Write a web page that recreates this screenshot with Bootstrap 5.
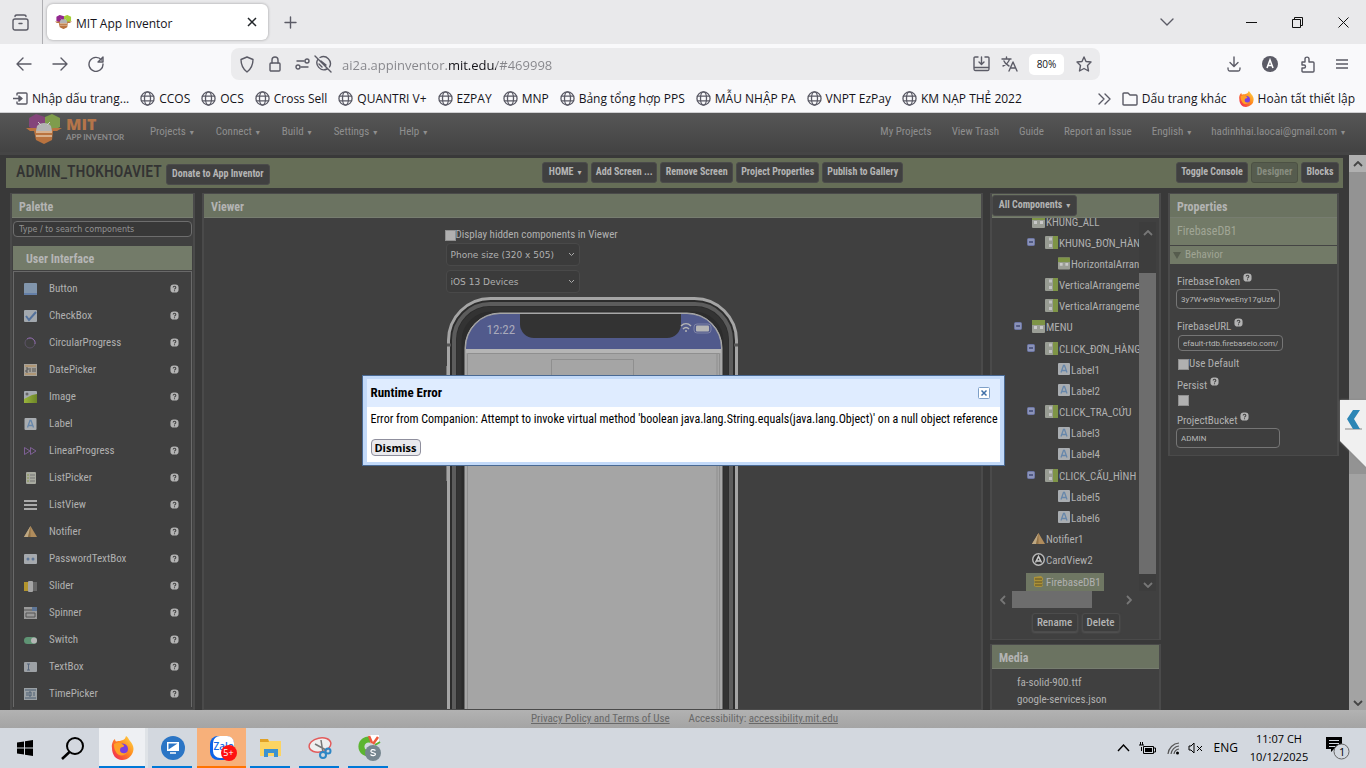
<!DOCTYPE html>
<html lang="vi">
<head>
<meta charset="utf-8">
<meta name="viewport" content="width=device-width, initial-scale=1">
<title>MIT App Inventor</title>
<link href="https://cdn.jsdelivr.net/npm/bootstrap@5.3.0/dist/css/bootstrap.min.css" rel="stylesheet">
<style>
:root{--ui:"Open Sans","Noto Sans",sans-serif;--app:"Roboto Condensed","Liberation Sans Narrow",Roboto,sans-serif;--form:"DejaVu Sans","Open Sans",sans-serif}
body{font-family:var(--ui);font-size:12px;line-height:16px;color:#15141a;background:#3a3a3a;overflow:hidden}
svg{display:block;flex:none}
button,a,input,select{font:inherit;color:inherit}
a{text-decoration:none}
.icon-btn{background:none;border:0;padding:0;color:#5b5b66}
.ln{fill:none;stroke:currentColor;stroke-width:1.4;stroke-linecap:round;stroke-linejoin:round}

/* browser chrome */
.tab-strip{background:#e9e9eb;height:44px}
.side-toggle{width:43px;border-right:1px solid #aeaeb2}
.tab-card{width:221px;height:36px;border-radius:6px;background:#fff;box-shadow:0 0 3px #00000055}
.win-btns{gap:35px;padding:0 13px 0 24px}
.tool-row{background:#f9f9fb;height:40px}
.nav-btns{width:231px;gap:20px;padding-left:16px}
.url-box{background:#ebebed;height:32px;border-radius:8px;margin-top:4px;color:#5b5b66}
.url-input{border:0;outline:0;background:linear-gradient(90deg,#85858a 106px,#15141a 106px,#15141a 154px,#85858a 154px);-webkit-background-clip:text;background-clip:text;-webkit-text-fill-color:transparent;font-size:13px;line-height:20px;padding:0;margin:1px 0 0 10px}
.zoom-pill{width:35px;height:21px;border-radius:5px;background:#fff;color:#15141a;font-size:10px;border:0;padding:0}
.mark-row{background:#f9f9fb;height:29px;border-bottom:1px solid #cfcfd2;gap:11px;padding:1px 11px 0 13px}
.mark-row a{display:flex;align-items:center;gap:4px;white-space:nowrap}
.mark-row svg{color:#5b5b66}

/* web page */
.app{font-family:var(--app);font-size:11px;line-height:14px;color:#b0b0b0;background:#393939}
.app-nav{height:39px;background:linear-gradient(#565656,#434343);color:#8f8f8f}
.brand{width:150px;padding:0 0 7px 26px}
.brand b{display:block;color:#b4754a;font-family:"Open Sans",sans-serif;font-weight:800;font-size:16px;line-height:16px}
.brand small{display:block;font-size:8px;line-height:10px;color:#8c8c8c;font-family:Lato,sans-serif;font-weight:700;white-space:nowrap}
.app-nav a{white-space:nowrap}
.arrow::after{content:"▾";font-size:8px;margin-left:4px;font-family:"DejaVu Sans",sans-serif}
.work{border-top:3px solid #454545}
.project-bar{background:#666e57;height:30px;margin:3px 6px 0;padding:0 4px 2px 0}
.project-left{width:40%;padding-left:10px;margin-right:3px}
.project-name{color:#333;font-size:16px;line-height:20px;font-weight:500;margin:0}
.dark-btn{background:#404040;border:1px solid #4b4b4b;border-radius:3px;height:21px;line-height:12px;font-weight:700;font-size:10px;color:#b4b4b4;padding:0;text-align:center;white-space:nowrap}
.dark-btn:disabled{background:#565c4e;border-color:#4c5144;color:#888d80}
.pane{background:#404040;border:solid #4a4a4a;border-width:1px 2px}
.pane-head{background:#6b7361;height:24px;border-bottom:1px solid #777d70;font-size:12px;font-weight:700;line-height:26px;padding-left:7px;color:#b3b3b3;margin:0}
.panes{padding:5px 10px 0;gap:7px}
.palette{width:185px}
.find{margin:3px 1px 0;height:16px;background:#383838;border:1px solid #6d6d6d;border-radius:4px;font:8px/12px var(--form);padding:0 5px;color:#aaa}
.find::placeholder{color:#929292}
.group-head{background:#737b69;height:24px;margin:9px 1px 0;font-size:12px;font-weight:700;line-height:26px;padding-left:13px;color:#b5b5b5}
.group-body{margin:1px 1px 0;border:1px solid #696969;border-bottom:0;padding:3px 10px 0}
.group-body li{height:27px;display:flex;align-items:center;gap:12px}
.group-body li>svg:last-child{margin-left:auto;margin-right:2px}
.stage{width:294px}
.box{appearance:none;width:11px;height:11px;background:#b0b0b0;border:1px solid #909090;margin:0;flex:none}
.show-hidden{margin:10px 0 1px -1px}
.pick{appearance:none;display:block;width:134px;height:23px;border:1px solid #494949;border-radius:4px;background:#3b3b3b url("data:image/svg+xml,%3Csvg xmlns='http://www.w3.org/2000/svg' width='7' height='5'%3E%3Cpath d='M1 1l2.500 2.500L6 1' fill='none' stroke='%23aaa'/%3E%3C/svg%3E") no-repeat right 4px center;font:9px/14px var(--form);color:#b0b0b0;padding:0 4px}
.handset{height:440px;margin-top:3px}
.status-time{left:41px;top:26px;font-size:13px;line-height:16px;color:#aab}
.components{width:171px}
.tree-box{height:373px}
.tree{height:381px;margin-bottom:-2px}
.tree li{display:flex;align-items:center;gap:1px;flex:1 1 0;white-space:nowrap;min-height:0}
.tree .fold{width:8px;margin-right:9px;margin-top:-4px}
.tree li>svg,.tree .pickd>svg{margin-top:-3px}
.l1{padding-left:40px}.l2{padding-left:53px}.l3{padding-left:66px}
.tree .f1{padding-left:22px}.tree .f2{padding-left:35px}
.pickd{display:flex;gap:1px;align-items:center;background:#6f7763;height:20px;padding:0 3px 0 6px;margin-left:-6px;margin-right:auto}
.vbar{width:17px;flex:none;margin-right:3px;background:#3d3d3d;color:#777}
.thumb{background:#6d6d6d}
.hbar{height:17px;width:146px;padding:0 4px 0 6px;color:#777}
.turn{transform:rotate(180deg)}.turn-l{transform:rotate(-90deg)}.turn-r{transform:rotate(90deg)}
.soft-btn{background:#3e3e3e;border:1px solid #4c4c4c;border-radius:3px;height:19px;line-height:14px;font-weight:500;color:#b4b4b4;padding:0;box-shadow:0 1px 2px #555}
.props{width:171px;height:263px}
.prop-strip{background:#727a67;color:#a0a595}
.prop-form{padding:7px 6px}
.prop-form label{display:flex;gap:3px;padding-left:1px}
.prop-form label svg{margin-top:-2px}
.prop-form .box{margin-left:1px}
.field{font:8px/12px Roboto,sans-serif;background:#3e3e3e;border:1px solid #757575;border-radius:4px;color:#b8b8b8;padding:0 4px}
.page-bar{width:17px;background:#a3a3a3;color:#444}
.app-foot{height:18px;background:linear-gradient(#b2b2b2,#a4a4a4);color:#686868;line-height:17px;padding-left:531px;gap:19px}
.app-foot a{text-decoration:underline}

/* dialog */
.dlg-veil{inset:0;z-index:5}
.dlg{width:643px;border:1px solid #4a6a94;background:#fff;color:#000}
.dlg-in{border:solid #c3daf9;border-width:3px 4px}
.dlg-head{background:#dfecff;height:28px;padding:0 6px 0 4px;font-size:13px;font-weight:700}
.dlg-body{padding:6px 0 6px 4px;font-size:12px;line-height:13px;white-space:nowrap}
.dismiss{margin-top:13px;width:50px;height:17px;padding:0;border:1px solid #8f8f9d;border-radius:4px;background:#e9e9ed;font:700 11px/13px "Open Sans",sans-serif;color:#000;display:block}
.flyout{right:0;top:287px;z-index:6;filter:drop-shadow(0 0 1px #888)}

/* taskbar */
.task{height:40px;background:#d3d8df;color:#000}
.task .tb{width:49px;height:40px;display:flex;align-items:center;justify-content:center;border:0;background:none;padding:0;position:relative}
.tb.run::after{content:"";position:absolute;left:4px;right:5px;bottom:0;height:2px;background:#0078d7}
.tb.live{background:#eef0f3;border-right:3px solid #dfe3e7;margin-left:1px}
.tb.live::after,.tb.call::after{left:0;right:0}
.tb.call{background:#f7b07a}.tb.call::after{background:#ff7200}
.zalo-word{left:4px;top:3px;color:#1268e8;font-size:10px;line-height:14px;font-weight:600}
.zalo-count{left:11px;top:9px;width:16px;height:16px;background:#f11;color:#fff;font-size:9px}
.clock{font-size:11px;line-height:18px;text-align:center;width:66px}
</style>
</head>
<body class="d-flex flex-column vh-100">
<svg width="0" height="0" class="position-absolute" aria-hidden="true">
 <defs>
  <linearGradient id="fx" x1="1" y1="0" x2="0" y2="1"><stop offset="0" stop-color="#ffe14d"/><stop offset=".45" stop-color="#ff8a1e"/><stop offset="1" stop-color="#f0185c"/></linearGradient>
  <linearGradient id="hill"><stop offset="0" stop-color="#9ab53c"/><stop offset="1" stop-color="#6d8628"/></linearGradient>
 </defs>
 <symbol id="globe" viewBox="0 0 16 16"><g class="ln"><circle cx="8" cy="8" r="7"/><ellipse cx="8" cy="8" rx="3.200" ry="7"/><path d="M1.500 5.500h13M1.500 10.500h13"/></g></symbol>
 <symbol id="fire" viewBox="0 0 24 24"><path d="M2 12C1 8 4 3 5 3c0 1 .5 2 1 2.500C8 4.500 9 5 10 5c1-1 5 0 6-5 2 1 3 4 4 5 2 2 3.500 5 3.500 8A11.500 11.500 0 0 1 12 24C6 24 2 19 2 12z" fill="url(#fx)"/><circle cx="12.500" cy="13" r="5.500" fill="#7a3fe0"/><path d="M4 8c3-2 6-2 8 0 2 1 3 2 1 3-2 0-3 1-3 3 0 4 5 4 7 2-1 4-9 5-11 0-2-3-2-5-2-8z" fill="#ff9f26"/></symbol>
 <symbol id="bee" viewBox="0 0 36 30"><path d="M10 0l9 3v10l-8 4-8-4V4z" fill="var(--w1,#84457a)"/><path d="M26 0l8 4v9l-8 4-7-4V3z" fill="var(--w2,#7f9c4c)"/><path d="M0 14h10l3 2h10l4-2h9l-5 3h-4l-1 9-8 4-8-4-2-9H4z" fill="#b9733f"/><path d="M11 12c3-4 11-4 14 0l1 5H10z" fill="#b3b3b3"/><path d="M12 8l3 3M24 8l-3 3" stroke="#ccc" stroke-width="1" fill="none"/><path d="M10 17h16v2H10zM10 21h16v2H10z" fill="#d7b08d"/></symbol>
 <symbol id="help" viewBox="0 0 10 10"><rect x=".5" y=".5" width="9" height="9" rx="3.500" fill="#b3b3b3"/><path d="M3.500 4c0-2 3-2 3 0 0 1-1.500 1-1.500 2M5 7v1" stroke="#444" fill="none" stroke-width="1.200"/></symbol>
 <symbol id="lab" viewBox="0 0 12 12"><rect width="12" height="12" rx="1" fill="#a9adb1"/><path d="M3 9.500L5.500 2.500h1L9 9.500M4 7.500h4" stroke="#6787ab" fill="none" stroke-width="1.300"/></symbol>
 <symbol id="va" viewBox="0 0 13 13"><rect width="13" height="13" rx="1" fill="#989c93"/><path d="M8 0h5v13H8z" fill="#7e9446"/><path d="M4 1.500h3v3H4zM4 8h3v3H4z" fill="#c2c2c2"/></symbol>
 <symbol id="ha" viewBox="0 0 13 13"><rect width="13" height="13" rx="1" fill="#9b9e96"/><path d="M0 0h13v5H0z" fill="#7e9446"/><path d="M2 6h3v3H2zM8 6h3v3H8z" fill="#c9c9c9"/></symbol>
 <symbol id="fold" viewBox="0 0 8 8"><rect x=".5" y=".5" width="7" height="7" rx="1" fill="#8b93b8" stroke="#6d76a6"/><path d="M2 4h4" stroke="#2c3560" stroke-width="1.200"/></symbol>
 <symbol id="warn" viewBox="0 0 13 11"><path d="M6.500 0L13 11H0z" fill="#b08c5c"/><path d="M6.500 0L4 11H0z" fill="#bda884"/><path d="M6.500 0v11H4z" fill="#8f7146"/></symbol>
 <symbol id="up" viewBox="0 0 10 6"><path d="M1 5l4-4 4 4" fill="none" stroke="currentColor" stroke-width="1.800"/></symbol>
</svg>

<header>
 <div class="tab-strip d-flex align-items-center">
  <div class="side-toggle h-100 d-flex align-items-center ps-2"><button class="icon-btn ms-1" aria-label="Sidebar"><svg width="17" height="17" viewBox="0 0 17 17" class="ln"><rect x="1" y="5" width="15" height="11" rx="2"/><path d="M3 2.500C3 1 4 1 5 1h7c1 0 2 0 2 1.500M7 9.500h3"/></svg></button></div>
  <div class="tab-card d-flex align-items-center ms-1 ps-2">
   <svg width="17" height="17" viewBox="0 0 36 32" style="--w1:#92278f;--w2:#a6ce39"><use href="#bee" width="36" height="30"/></svg>
   <span class="px-1 pt-1">MIT App Inventor</span>
   <button class="icon-btn ms-auto me-2 text-dark" aria-label="Close tab"><svg width="14" height="10" viewBox="0 0 14 10"><path d="M2 1l8 8M10 1L2 9" stroke="currentColor" stroke-width="1.500"/></svg></button>
  </div>
  <button class="icon-btn ms-3" aria-label="New tab"><svg width="13" height="13" viewBox="0 0 13 13" class="ln"><path d="M6.500 1v11M1 6.500h11"/></svg></button>
  <button class="icon-btn ms-auto" aria-label="List tabs"><svg width="14" height="8" viewBox="0 0 14 8" class="ln"><path d="M1 1l6 6 6-6"/></svg></button>
  <div class="win-btns d-flex align-items-center ms-5">
   <button class="icon-btn text-dark" aria-label="Minimize"><svg width="11" height="11"><path d="M0 5.500h11" stroke="#111"/></svg></button>
   <button class="icon-btn text-dark" aria-label="Restore"><svg width="11" height="11" fill="none" stroke="#111"><path d="M.5 2.500h8v8h-8zM2.500 2V.500h8v8H9"/></svg></button>
   <button class="icon-btn text-dark me-1" aria-label="Close"><svg width="11" height="11" stroke="#111"><path d="M.5.500l10 10M10.500.500l-10 10"/></svg></button>
  </div>
 </div>
 <div class="tool-row d-flex">
  <div class="nav-btns d-flex align-items-center">
   <button class="icon-btn" aria-label="Back"><svg width="16" height="14" viewBox="0 0 16 14" class="ln"><path d="M15 7H1M7 1L1 7l6 6"/></svg></button>
   <button class="icon-btn" aria-label="Forward"><svg width="16" height="14" viewBox="0 0 16 14" class="ln"><path d="M1 7h14M9 1l6 6-6 6"/></svg></button>
   <button class="icon-btn" aria-label="Reload"><svg width="16" height="16" viewBox="0 0 16 16" class="ln"><path d="M13.500 4A7 7 0 1 0 15 8M15 1v5h-5z"/></svg></button>
  </div>
  <div class="url-box d-flex align-items-center flex-grow-1 px-2">
   <svg width="16" height="17" viewBox="0 0 16 17" class="ln"><path d="M8 1l6 2.500C14 9 12 13 8 16 4 13 2 9 2 3.500z"/></svg>
   <svg width="14" height="16" viewBox="0 0 14 16" class="ln" style="margin:0 13px"><rect x="2" y="7" width="10" height="8" rx="1"/><path d="M4 7V4c0-4 6-4 6 0v3"/></svg>
   <svg width="15" height="12" viewBox="0 0 15 12" class="ln"><circle cx="12" cy="3" r="2"/><path d="M2 3h7M6 9h7"/><circle cx="3" cy="9" r="2"/></svg>
   <svg width="18" height="18" viewBox="0 0 18 18" class="ln ms-1"><path d="M1 1l16 16M4 4a7 7 0 0 0 9 10M6 2.500A7 7 0 0 1 15.500 12M7 6l5 4M5 9l3 3"/></svg>
   <input class="url-input flex-grow-1" aria-label="Address" value="ai2a.appinventor.mit.edu/#469998">
   <svg width="17" height="16" viewBox="0 0 17 16" class="ln"><path d="M5 1H2.500C1 1 1 1.500 1 3v9c0 2 0 2.500 1.500 2.500h12c1.500 0 1.500-.5 1.500-2.500V3c0-1.500 0-2-1.500-2H12M8.500 1v7M6 6l2.500 2.500L11 6M1 11.500h15"/></svg>
   <svg width="17" height="16" viewBox="0 0 17 16" class="ln" style="margin:0 11px"><path d="M1 3h9M5.500 1v2M2 10c4-2 6-4 6.500-7M3 5c1 3 3 4 5 5M8 15l4-9 4 9M9.500 12h5"/></svg>
   <button class="zoom-pill">80%</button>
   <svg width="16" height="16" viewBox="0 0 16 16" class="ln" style="margin-left:12px"><path d="M8 1l2 4.500 5 .5-3.500 3.500 1 5.500L8 12.500 3.500 15l1-5.500L1 6l5-.5z"/></svg>
  </div>
  <div class="d-flex align-items-center justify-content-between" style="width:266px;padding:0 18px 0 127px">
   <button class="icon-btn" aria-label="Downloads"><svg width="14" height="16" viewBox="0 0 14 16" class="ln"><path d="M7 1v9M3 6.500L7 10.500l4-4M1 12c0 2 0 3 2 3h8c2 0 2-1 2-3"/></svg></button>
   <button class="icon-btn" aria-label="Account"><svg width="16" height="16" viewBox="0 0 16 16"><circle cx="8" cy="8" r="8" fill="#5b5b66"/><path d="M5 12l3-8 3 8M6 9.500h4" stroke="#fff" stroke-width="1.600" fill="none"/></svg></button>
   <button class="icon-btn" aria-label="Extensions"><svg width="15" height="17" viewBox="0 0 15 17" class="ln"><path d="M2 6h3V3c0-2.500 4-2.500 4 0v3h4c1 0 1 .500 1 1v8c0 1 0 1-1 1H3c-1 0-1-.500-1-1v-3h2c2 0 2-3 0-3H2z"/></svg></button>
   <button class="icon-btn" aria-label="Menu"><svg width="12" height="10" viewBox="0 0 12 10" class="ln"><path d="M0 1h12M0 5h12M0 9h12"/></svg></button>
  </div>
 </div>
 <nav class="mark-row d-flex align-items-center" aria-label="Bookmarks">
  <a href="#"><svg width="15" height="13" viewBox="0 0 15 13" class="ln"><path d="M4 3V2c0-1 0-1 1-1h8c1 0 1 0 1 1v9c0 1 0 1-1 1H5c-1 0-1 0-1-1v-1M0 6.500h8M6 4l3 2.500L6 9z"/></svg>Nhập dấu trang...</a>
  <a href="#"><svg width="15" height="15"><use href="#globe"/></svg>CCOS</a>
  <a href="#"><svg width="15" height="15"><use href="#globe"/></svg>OCS</a>
  <a href="#"><svg width="15" height="15"><use href="#globe"/></svg>Cross Sell</a>
  <a href="#"><svg width="15" height="15"><use href="#globe"/></svg>QUANTRI V+</a>
  <a href="#"><svg width="15" height="15"><use href="#globe"/></svg>EZPAY</a>
  <a href="#"><svg width="15" height="15"><use href="#globe"/></svg>MNP</a>
  <a href="#"><svg width="15" height="15"><use href="#globe"/></svg>Bảng tổng hợp PPS</a>
  <a href="#"><svg width="15" height="15"><use href="#globe"/></svg>MẪU NHẬP PA</a>
  <a href="#"><svg width="15" height="15"><use href="#globe"/></svg>VNPT EzPay</a>
  <a href="#"><svg width="15" height="15"><use href="#globe"/></svg>KM NẠP THẺ 2022</a>
  <button class="icon-btn ms-auto" aria-label="More bookmarks"><svg width="13" height="12" viewBox="0 0 13 12" class="ln"><path d="M1 1l5 5-5 5M7 1l5 5-5 5"/></svg></button>
  <a href="#"><svg width="16" height="14" viewBox="0 0 16 14" class="ln"><path d="M1 12V2c0-1 0-1 1-1h4l2 2h6c1 0 1 0 1 1v8c0 1 0 1-1 1H2c-1 0-1 0-1-1z"/></svg>Dấu trang khác</a>
  <a href="#"><svg width="16" height="16"><use href="#fire"/></svg>Hoàn tất thiết lập</a>
 </nav>
</header>

<main class="app flex-grow-1 d-flex flex-column position-relative" style="min-height:0">
 <nav class="app-nav d-flex align-items-center flex-shrink-0">
  <div class="brand d-flex align-items-center gap-1"><svg width="36" height="30"><use href="#bee"/></svg><div><b>MIT</b><small>APP INVENTOR</small></div></div>
  <div class="d-flex" style="gap:22px">
   <a href="#" class="arrow">Projects</a><a href="#" class="arrow">Connect</a><a href="#" class="arrow">Build</a><a href="#" class="arrow">Settings</a><a href="#" class="arrow">Help</a>
  </div>
  <div class="d-flex ms-auto" style="gap:20px;padding-right:21px">
   <a href="#">My Projects</a><a href="#">View Trash</a><a href="#">Guide</a><a href="#">Report an Issue</a><a href="#" class="arrow">English</a><a href="#" class="arrow">hadinhhai.laocai@gmail.com</a>
  </div>
 </nav>
 <div class="work d-flex flex-grow-1" style="min-height:0">
  <div class="flex-grow-1 d-flex flex-column overflow-hidden">
   <div class="project-bar d-flex align-items-center flex-shrink-0">
    <div class="project-left d-flex align-items-center gap-1"><h1 class="project-name">ADMIN_THOKHOAVIET</h1><button class="dark-btn mt-1" style="width:104px">Donate to App Inventor</button></div>
    <div class="d-flex" style="gap:3px">
     <button class="dark-btn arrow" style="width:46px">HOME</button><button class="dark-btn" style="width:66px">Add Screen ...</button><button class="dark-btn" style="width:73px">Remove Screen</button><button class="dark-btn" style="width:83px">Project Properties</button><button class="dark-btn" style="width:81px">Publish to Gallery</button>
    </div>
    <div class="d-flex ms-auto" style="gap:3px">
     <button class="dark-btn" style="width:72px">Toggle Console</button><button class="dark-btn" style="width:47px" disabled>Designer</button><button class="dark-btn" style="width:38px">Blocks</button>
    </div>
   </div>
   <div class="panes d-flex flex-grow-1" style="min-height:0">
    <section class="pane palette overflow-hidden flex-shrink-0">
     <h2 class="pane-head">Palette</h2>
     <div class="d-flex"><input class="find flex-grow-1" aria-label="Search components" placeholder="Type / to search components"></div>
     <div class="group-head">User Interface</div>
     <ul class="group-body list-unstyled">
      <li><svg width="13" height="12"><rect width="13" height="12" rx="1" fill="#8195ac"/><path d="M0 10h13v2H0z" fill="#647fa8"/></svg>Button<svg width="9" height="9"><use href="#help"/></svg></li>
      <li><svg width="13" height="12"><rect width="13" height="12" rx="1" fill="#a2a8ae"/><path d="M2 6l3 4 7-8" fill="none" stroke="#53719c" stroke-width="2"/></svg>CheckBox<svg width="9" height="9"><use href="#help"/></svg></li>
      <li><svg width="13" height="12" fill="none"><circle cx="6" cy="6" r="5" stroke="#5d5468"/><path d="M3 2c4-3 9 1 8 5" stroke="#8d69a8"/></svg>CircularProgress<svg width="9" height="9"><use href="#help"/></svg></li>
      <li><svg width="13" height="12"><rect width="13" height="12" fill="#a6a29a"/><path d="M1 2h11M1 10h11" stroke="#b98b50"/><path d="M2 4h2v2H2v2h2M6 4v4M9 4v4M11 4v4" stroke="#555" fill="none"/></svg>DatePicker<svg width="9" height="9"><use href="#help"/></svg></li>
      <li><svg width="13" height="12"><rect width="13" height="12" rx="1" fill="#a5aab0"/><path d="M0 8l8-4 5-1v9H0z" fill="url(#hill)"/><circle cx="3" cy="3" r="1.500" fill="#666"/></svg>Image<svg width="9" height="9"><use href="#help"/></svg></li>
      <li><svg width="13" height="12"><use href="#lab"/></svg>Label<svg width="9" height="9"><use href="#help"/></svg></li>
      <li><svg width="13" height="12" fill="none" stroke="#7f6096"><path d="M.5 2.500v7L6 6zM6.500 2.500v7L12 6z"/></svg>LinearProgress<svg width="9" height="9"><use href="#help"/></svg></li>
      <li><svg width="13" height="12"><rect x="2" width="10" height="12" rx="1" fill="#a8aaa0"/><path d="M3 3h2M3 6h2M3 9h2" stroke="#88964c"/><path d="M6 3h5M6 6h5M6 9h5" stroke="#777"/></svg>ListPicker<svg width="9" height="9"><use href="#help"/></svg></li>
      <li><svg width="13" height="12" stroke="#aaa" stroke-width="2"><path d="M0 2h13M0 6h13M0 10h13"/></svg>ListView<svg width="9" height="9"><use href="#help"/></svg></li>
      <li><svg width="13" height="11"><use href="#warn"/></svg>Notifier<svg width="9" height="9"><use href="#help"/></svg></li>
      <li><svg width="13" height="12"><rect y="1" width="13" height="10" rx="1" fill="#a5a9ad"/><circle cx="4" cy="6" r="1.500" fill="#5e7697"/><circle cx="9" cy="6" r="1.500" fill="#5e7697"/></svg>PasswordTextBox<svg width="9" height="9"><use href="#help"/></svg></li>
      <li><svg width="13" height="12"><path d="M0 2h5v9H0z" fill="#b2942d"/><path d="M9 2h4v9H9z" fill="#666"/><rect x="4" y="1" width="5" height="11" rx="1" fill="#a5a5a5"/></svg>Slider<svg width="9" height="9"><use href="#help"/></svg></li>
      <li><svg width="13" height="12"><rect width="13" height="12" fill="#999"/><path d="M0 3h13M2 6h9v4H2z" stroke="#555" fill="none"/><path d="M8 0h5v4H8z" fill="#5e7697"/></svg>Spinner<svg width="9" height="9"><use href="#help"/></svg></li>
      <li><svg width="13" height="12"><rect y="3" width="13" height="7" rx="3.500" fill="#5f9474"/><circle cx="10" cy="6.500" r="3" fill="#b5b5b5"/></svg>Switch<svg width="9" height="9"><use href="#help"/></svg></li>
      <li><svg width="13" height="12"><rect y="1" width="13" height="10" rx="1" fill="#9da1a5"/><path d="M3 3h3M4.500 3v6M3 9h3" stroke="#56667d"/></svg>TextBox<svg width="9" height="9"><use href="#help"/></svg></li>
      <li><svg width="13" height="12"><rect width="13" height="12" fill="#9ba1a5"/><path d="M1 2h11M1 10h11M3 4v4M5 4h2v4H5zM10 4v4" stroke="#4c5f73" fill="none"/></svg>TimePicker<svg width="9" height="9"><use href="#help"/></svg></li>
     </ul>
    </section>
    <section class="pane flex-grow-1 overflow-hidden">
     <h2 class="pane-head">Viewer</h2>
     <div class="stage mx-auto">
      <label class="show-hidden d-flex align-items-center"><input type="checkbox" class="box">Display hidden components in Viewer</label>
      <select class="pick" aria-label="Screen size"><option>Phone size (320 x 505)</option></select>
      <select class="pick mt-1" aria-label="Device"><option>iOS 13 Devices</option></select>
      <div class="handset position-relative">
       <svg width="292" height="440" viewBox="0 0 292 440" fill="none">
        <path d="M0 70v30M0 125v60" stroke="#777" stroke-width="2"/>
        <rect x="2.500" y="2.500" width="288" height="560" rx="42" fill="#2c2c2c" stroke="#a5a5a5" stroke-width="3"/>
        <path d="M1 49h4M288 49h4" stroke="#555" stroke-width="3"/>
        <rect x="8" y="8" width="277" height="560" rx="36" stroke="#5c5c5c" stroke-width="4"/>
        <rect x="13" y="13" width="267" height="560" rx="32" stroke="#333" stroke-width="5"/>
        <path d="M19 52a35 35 0 0 1 35-35h187a35 35 0 0 1 35 35v388H19z" fill="#a5a5a5" stroke="#aaa"/>
        <path d="M20 52a34 34 0 0 1 34-34h187a34 34 0 0 1 34 34v0H20zM20 51h255v2H20z" fill="#515a8c"/>
        <path d="M74 18h161v10a14 14 0 0 1-14 14H88a14 14 0 0 1-14-14z" fill="#333"/>
        <path d="M235 30c3-3 7-3 10 0M237 33c2-2 4-2 6 0" stroke="#b5b5b5" stroke-width="1.500"/><circle cx="240" cy="35" r="1" fill="#b5b5b5"/>
        <rect x="248" y="28" width="17" height="9" rx="3" stroke="#7c81a5"/><rect x="250" y="29.500" width="13" height="6" rx="1" fill="#b5b5b5"/>
        <path d="M20 53h255v4H20z" fill="#b5b5b5"/>
        <path d="M21.500 440V57.500h252V440M271 58v380M105.500 160V63.500h82V160z" stroke="#8f8f8f"/>
       </svg>
       <span class="status-time position-absolute">12:22</span>
      </div>
     </div>
    </section>
    <div class="components d-flex flex-column flex-shrink-0 overflow-hidden">
     <section class="pane flex-shrink-0">
      <div class="pane-head d-flex align-items-center ps-0"><button class="dark-btn arrow" style="width:85px">All Components</button></div>
      <div class="d-flex">
       <div class="tree-box flex-grow-1 overflow-hidden d-flex flex-column justify-content-end" style="min-width:0">
        <ul class="tree list-unstyled mt-0 d-flex flex-column flex-shrink-0">
         <li class="l1"><svg width="13" height="13"><use href="#ha"/></svg>KHUNG_ALL</li>
         <li class="f2"><svg class="fold" height="8"><use href="#fold"/></svg><svg width="13" height="13"><use href="#va"/></svg>KHUNG_ĐƠN_HÀNG</li>
         <li class="l3"><svg width="12" height="13"><use href="#ha"/></svg>HorizontalArrangement1</li>
         <li class="l2"><svg width="13" height="13"><use href="#va"/></svg>VerticalArrangement1</li>
         <li class="l2"><svg width="13" height="13"><use href="#va"/></svg>VerticalArrangement2</li>
         <li class="f1"><svg class="fold" height="8"><use href="#fold"/></svg><svg width="13" height="13"><use href="#ha"/></svg>MENU</li>
         <li class="f2"><svg class="fold" height="8"><use href="#fold"/></svg><svg width="13" height="13"><use href="#va"/></svg>CLICK_ĐƠN_HÀNG</li>
         <li class="l3"><svg width="12" height="12"><use href="#lab"/></svg>Label1</li>
         <li class="l3"><svg width="12" height="12"><use href="#lab"/></svg>Label2</li>
         <li class="f2"><svg class="fold" height="8"><use href="#fold"/></svg><svg width="13" height="13"><use href="#va"/></svg>CLICK_TRA_CỨU</li>
         <li class="l3"><svg width="12" height="12"><use href="#lab"/></svg>Label3</li>
         <li class="l3"><svg width="12" height="12"><use href="#lab"/></svg>Label4</li>
         <li class="f2"><svg class="fold" height="8"><use href="#fold"/></svg><svg width="13" height="13"><use href="#va"/></svg>CLICK_CẤU_HÌNH</li>
         <li class="l3"><svg width="12" height="12"><use href="#lab"/></svg>Label5</li>
         <li class="l3"><svg width="12" height="12"><use href="#lab"/></svg>Label6</li>
         <li class="l1"><svg width="13" height="11"><use href="#warn"/></svg>Notifier1</li>
         <li class="l1"><svg width="13" height="13" viewBox="0 0 13 13"><circle cx="6.500" cy="6.500" r="5.800" fill="#333" stroke="#bbb" stroke-width="1.400"/><path d="M3.500 9.500l3-6 3 6M5 8h3" stroke="#ccc" stroke-width="1.500" fill="none"/></svg>CardView2</li>
         <li class="l1"><span class="pickd"><svg width="13" height="13" viewBox="0 0 13 13"><path d="M2 2l7-1 2 2v2l-1 1 1 2-1 1 1 2-2 1H4l-2-1V8l1-1-1-1z" fill="#ab9138"/><path d="M3 4h7M3 7h7M3 10h7" stroke="#5c5026"/></svg>FirebaseDB1</span></li>
        </ul>
       </div>
       <div class="vbar d-flex flex-column align-items-center mt-1">
        <svg width="10" height="6" class="mt-2"><use href="#up"/></svg>
        <div class="thumb w-100" style="height:301px;margin-top:37px"></div>
        <svg width="10" height="6" class="turn mt-2"><use href="#up"/></svg>
       </div>
      </div>
      <div class="hbar d-flex align-items-center">
       <svg width="10" height="6" class="turn-l"><use href="#up"/></svg>
       <div class="thumb h-100 ms-1" style="width:80px"></div>
       <svg width="10" height="6" class="turn-r ms-auto"><use href="#up"/></svg>
      </div>
      <div class="d-flex justify-content-center gap-1" style="padding:5px 0 7px"><button class="soft-btn" style="width:46px">Rename</button><button class="soft-btn" style="width:38px">Delete</button></div>
     </section>
     <section class="pane flex-grow-1 mt-1">
      <h2 class="pane-head">Media</h2>
      <ul class="list-unstyled m-0" style="padding:5px 0 0 25px;line-height:17px"><li>fa-solid-900.ttf</li><li>google-services.json</li></ul>
     </section>
    </div>
    <section class="pane props flex-shrink-0">
     <h2 class="pane-head">Properties</h2>
     <div class="prop-strip" style="font-size:12px;line-height:27px;padding-left:7px">FirebaseDB1</div>
     <div class="prop-strip d-flex align-items-center gap-1" style="height:19px;padding-left:3px;border-top:1px solid #444"><svg width="8" height="7"><path d="M0 0h8L4 7z" fill="#565c4e"/></svg>Behavior</div>
     <div class="prop-form d-flex flex-column align-items-start">
      <label class="pt-1" for="tok">FirebaseToken<svg width="9" height="9"><use href="#help"/></svg></label>
      <input id="tok" class="field" style="width:104px;height:20px" value="3y7W-w9IaYweEny17gUzM">
      <label style="margin-top:11px" for="url">FirebaseURL<svg width="9" height="9"><use href="#help"/></svg></label>
      <input id="url" class="field" style="width:105px;height:16px;margin:1px 0 0 2px" value="efault-rtdb.firebaseio.com/">
      <label class="align-items-center" style="margin-top:6px;gap:0"><input type="checkbox" class="box">Use Default</label>
      <label style="margin-top:8px" for="per">Persist<svg width="9" height="9"><use href="#help"/></svg></label>
      <input id="per" type="checkbox" class="box" style="margin:2px 0 0 2px">
      <label style="margin-top:8px" for="buc">ProjectBucket<svg width="9" height="9"><use href="#help"/></svg></label>
      <input id="buc" class="field" style="width:104px;height:20px" value="ADMIN">
     </div>
    </section>
   </div>
  </div>
  <div class="page-bar d-flex flex-column align-items-center flex-shrink-0">
   <div class="w-100 d-flex justify-content-center" style="height:17px;padding-top:6px;background:#b0b0b0"><svg width="10" height="6"><use href="#up"/></svg></div>
   <div class="w-100" style="height:302px;background:#939393"></div>
   <svg width="10" height="6" class="turn mt-auto mb-1"><use href="#up"/></svg>
  </div>
 </div>
 <footer class="app-foot d-flex flex-shrink-0"><a href="#">Privacy Policy and Terms of Use</a><span>Accessibility: <a href="#">accessibility.mit.edu</a></span></footer>

 <div class="dlg-veil position-absolute d-flex align-items-center justify-content-center">
  <div class="dlg" role="dialog" aria-labelledby="dt"><div class="dlg-in">
   <div class="dlg-head d-flex align-items-center"><span id="dt">Runtime Error</span><button class="icon-btn ms-auto me-1" aria-label="Close dialog"><svg width="12" height="12"><rect x=".5" y=".5" width="11" height="11" rx="1" fill="#fff" stroke="#7ea0c8"/><path d="M3.500 3.500l5 5M8.500 3.500l-5 5" stroke="#4070a8" stroke-width="1.500"/></svg></button></div>
   <div class="dlg-body">Error from Companion: Attempt to invoke virtual method 'boolean java.lang.String.equals(java.lang.Object)' on a null object reference
    <button class="dismiss">Dismiss</button></div>
  </div></div>
 </div>
 <svg class="flyout position-absolute" width="26" height="67" viewBox="0 0 26 67"><path d="M0 0h26v67L0 41z" fill="#f0f0f0"/><path d="M5 29h17" stroke="#bbb" stroke-width="2"/><path d="M13 10h7l-6 9 6 10h-7L7 19z" fill="#2d86b5"/></svg>
</main>

<footer class="task d-flex align-items-stretch flex-shrink-0">
 <button class="tb" aria-label="Start"><svg width="16" height="16"><path d="M0 2.500L7 1.500v6H0zM8 1.300L16 0v7.500H8zM0 8.500h7v6L0 13.500zM8 8.500h8V16l-8-1.200z"/></svg></button>
 <button class="tb" aria-label="Search"><svg width="25" height="23" fill="none" stroke="#000"><circle cx="14" cy="9" r="8" stroke-width="2"/><path d="M8.500 15L1 22" stroke-width="2.500"/></svg></button>
 <button class="tb run live" aria-label="Firefox"><svg width="24" height="24"><use href="#fire"/></svg></button>
 <button class="tb run" aria-label="Remote desktop"><svg width="24" height="24"><circle cx="12" cy="12" r="12" fill="#2b75c5"/><path d="M6 6h12v9H6z" fill="#fff"/><path d="M7.500 7.500h9l-9 6z" fill="#2b75c5"/><path d="M9 17h6" stroke="#fff" stroke-width="1.500"/></svg></button>
 <button class="tb run call" aria-label="Zalo"><span class="position-relative d-block"><svg width="24" height="24"><rect width="24" height="24" rx="8" fill="#0c63e7"/><rect x="3" width="21" height="22" rx="7" fill="#fff"/></svg><span class="zalo-word position-absolute">Zalo</span><span class="zalo-count position-absolute rounded-circle">5+</span></span></button>
 <button class="tb run" aria-label="File Explorer"><svg width="22" height="20"><path d="M0 1h8l1 2h12v15H0z" fill="#fcd462"/><path d="M0 1h8l1 3H0z" fill="#e0a126"/><path d="M4 11h14v8h-4v-4H8v4H4z" fill="#3d92cf"/></svg></button>
 <button class="tb run" aria-label="Snipping Tool"><svg width="24" height="24" fill="none"><ellipse cx="12" cy="9" rx="11" ry="7" fill="#eee" stroke="#e35b5b" stroke-width="1.500" transform="rotate(-12 12 9)"/><path d="M13 4l2 13M7 8l11 6" stroke="#777" stroke-width="1.500"/><circle cx="15" cy="19" r="3" stroke="#2d86c5" stroke-width="2"/><circle cx="20" cy="15" r="2.500" stroke="#2d86c5" stroke-width="2"/></svg></button>
 <button class="tb run" aria-label="Coc Coc"><svg width="26" height="26" fill="none"><path d="M15 5a7 7 0 1 0 0 13" stroke="#5cb531" stroke-width="6"/><path d="M13 0h10v8h-8z" fill="#fff"/><path d="M13 1l3 7M22 2l-5 7" stroke="#ef5a3c" stroke-width="2.500"/><path d="M19 10l5-3" stroke="#5cb531" stroke-width="2"/><circle cx="17" cy="18" r="8" fill="#76868f"/><path d="M19.500 15.500c-2-1.500-5-1-4.500 1 .5 1.500 4 1 4.500 2.500 0 2-3.500 2-5 .500" stroke="#fff" stroke-width="1.200"/></svg></button>
 <div class="d-flex align-items-center ms-auto">
  <svg width="13" height="8" fill="none" stroke="#000" stroke-width="1.400"><path d="M1 7l5.500-6L12 7"/></svg>
  <svg width="17" height="13" style="margin:0 11px 0 9px"><path d="M4.500 4.500h10v7h-10zM15 6h1.500v4H15M2.500 5v4M0 3h5M1.500 0v3M3.500 0v3" fill="none" stroke="#000"/><path d="M6 6h7v4H6z"/></svg>
  <svg width="13" height="13" fill="none" stroke="#555" stroke-width="1.200"><path d="M1 12A12 12 0 0 1 12 1M4 12a9 9 0 0 1 8-8M7 12a6 6 0 0 1 5-5" /><circle cx="10.500" cy="11" r="1.500" fill="#000" stroke="none"/></svg>
  <svg width="15" height="12" fill="none" stroke="#000" style="margin:0 11px 0 8px"><path d="M1 4h2l3-3v10L3 8H1zM9 4l5 5M14 4L9 9"/></svg>
  <span>ENG</span>
  <div class="clock ms-2">11:07 CH<br>10/12/2025</div>
  <span class="position-relative d-block" style="margin:0 16px 0 13px"><svg width="25" height="24"><path d="M1 1h16v12H9l-3 3v-3H1z" fill="#000"/><path d="M4 4.500h10M4 7.500h10M4 10.500h6" stroke="#d3d8df" /><circle cx="16.500" cy="15.500" r="7.500" fill="#d3d8df" stroke="#666"/></svg><span class="position-absolute" style="left:14px;top:8px;font-size:11px;line-height:16px">1</span></span>
 </div>
</footer>
<script src="https://cdn.jsdelivr.net/npm/bootstrap@5.3.0/dist/js/bootstrap.bundle.min.js"></script>
</body>
</html>
